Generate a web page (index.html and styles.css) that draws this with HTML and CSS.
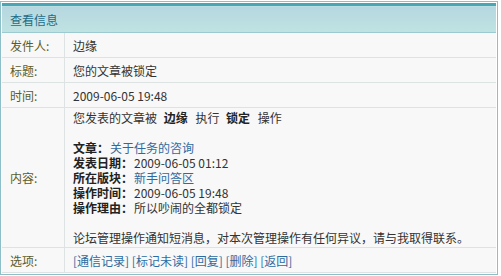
FILE: index.html
```html
<!DOCTYPE html>
<html lang="zh-CN">
<head>
  <meta charset="UTF-8">
  <title>查看信息</title>
  <link rel="stylesheet" href="styles.css">
</head>
<body>
  <div class="box">
    <table class="msg">
      <tr><th colspan="2" class="head">查看信息</th></tr>
      <tr><td class="label">发件人:</td><td class="val">边缘</td></tr>
      <tr><td class="label">标题:</td><td class="val">您的文章被锁定</td></tr>
      <tr><td class="label">时间:</td><td class="val">2009-06-05 19:48</td></tr>
      <tr>
        <td class="label">内容:</td>
        <td class="val content">
          <div class="line wide">您发表的文章被 <b>边缘</b> 执行 <b>锁定</b> 操作</div>
          <div class="line"></div>
          <div class="line"><b>文章：</b><a href="#">关于任务的咨询</a></div>
          <div class="line"><b>发表日期：</b>2009-06-05 01:12</div>
          <div class="line"><b>所在版块：</b><a href="#">新手问答区</a></div>
          <div class="line"><b>操作时间：</b>2009-06-05 19:48</div>
          <div class="line"><b>操作理由：</b>所以吵闹的全都锁定</div>
          <div class="line"></div>
          <div class="line">论坛管理操作通知短消息，对本次管理操作有任何异议，请与我取得联系。</div>
        </td>
      </tr>
      <tr>
        <td class="label">选项:</td>
        <td class="val links">
          <a href="#">[通信记录]</a> <a href="#">[标记未读]</a> <a href="#">[回复]</a> <a href="#">[删除]</a> <a href="#">[返回]</a>
        </td>
      </tr>
    </table>
  </div>
</body>
</html>
```

FILE: styles.css
```css
body {
  margin: 0;
  padding: 0;
  background: #fff;
  font-family: "Noto Sans CJK SC", "DejaVu Sans", sans-serif;
  font-size: 12px;
  color: #333;
}

/* outer frame */
.box {
  width: 494px;
  margin: 1px 0 0 0;
  border: 1px solid #8cbfc8;
  padding: 1px;
}

.msg {
  width: 100%;
  border-collapse: collapse;
  border-top: 3px solid #4aa6b4;
  background: #f8f8f8;
}

.msg td, .msg th {
  border-bottom: 1px solid #dde3e3;
  padding: 0;
  height: 24px;
  line-height: 15px;
}

.head {
  text-align: left;
  font-weight: normal;
  font-size: 12px;
  color: #1d6c89;
  padding-left: 8px !important;
  height: 26px !important;
  background: linear-gradient(#b5d6df, #bfe3e2);
  border-bottom: 1px solid #9ccad0 !important;
}

.label {
  width: 54px;
  padding-left: 8px !important;
  color: #5c5c2a;
  border-right: 1px solid #dde3e3;
}

.val {
  padding-left: 8px !important;
}

.content {
  padding-top: 2px !important;
  padding-bottom: 2px !important;
}

.line {
  height: 15px;
  line-height: 15px;
  white-space: nowrap;
}

.line.wide {
  word-spacing: 4px;
}

.line b {
  margin-right: 1px;
}

a {
  color: #2f6a9e;
  text-decoration: none;
}

b {
  font-weight: bold;
  color: #222;
}
```
